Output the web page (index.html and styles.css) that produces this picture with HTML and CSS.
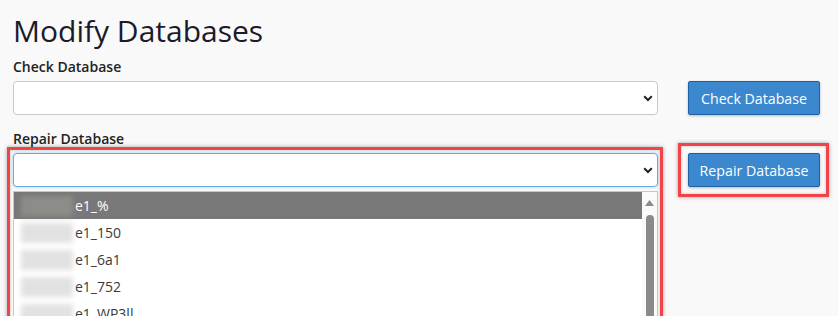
FILE: index.html
```html
<!DOCTYPE html>
<html>
<head>
<meta charset="utf-8">
<link rel="stylesheet" href="styles.css">
</head>
<body>
<div class="page">
  <h1 class="title">Modify Databases</h1>

  <div class="group">
    <label class="label">Check Database</label>
    <div class="row">
      <div class="select">
        <svg class="chev" width="10" height="7" viewBox="0 0 10 7"><path d="M1.2 1.3 L5 5 L8.8 1.3" fill="none" stroke="#222" stroke-width="2"/></svg>
      </div>
      <button class="btn">Check Database</button>
    </div>
  </div>

  <div class="group group2">
    <label class="label">Repair Database</label>
    <div class="row">
      <div class="annot annot-list">
        <div class="select focus">
          <svg class="chev" width="10" height="7" viewBox="0 0 10 7"><path d="M1.2 1.3 L5 5 L8.8 1.3" fill="none" stroke="#222" stroke-width="2"/></svg>
        </div>
        <div class="listbox">
          <div class="options">
            <div class="opt selected"><span class="blur"></span><span class="txt">e1_%</span></div>
            <div class="opt"><span class="blur"></span><span class="txt">e1_150</span></div>
            <div class="opt"><span class="blur"></span><span class="txt">e1_6a1</span></div>
            <div class="opt"><span class="blur"></span><span class="txt">e1_752</span></div>
            <div class="opt"><span class="blur"></span><span class="txt">e1_WP3ll</span></div>
          </div>
          <div class="scrollbar">
            <svg class="up" width="9" height="6" viewBox="0 0 9 6"><path d="M4.5 0 L9 6 L0 6 Z" fill="#8a8a8a"/></svg>
            <div class="thumb"></div>
          </div>
        </div>
      </div>
      <div class="annot annot-btn">
        <button class="btn">Repair Database</button>
      </div>
    </div>
  </div>
</div>
</body>
</html>
```

FILE: styles.css
```css
html, body {
  margin: 0;
  padding: 0;
  height: 100%;
  overflow: hidden;
  background: #f9f9f9;
}

.page {
  padding: 10px 0 0 13px;
  font-family: "Open Sans", "Liberation Sans", sans-serif;
  color: #333;
}

.title {
  margin: 0;
  font-size: 30px;
  font-weight: 400;
  line-height: 41px;
  color: #1b1b2b;
}

.group {
  margin-top: 6px;
}

.group2 {
  margin-top: 14px;
}

.label {
  display: block;
  font-size: 14px;
  font-weight: 600;
  line-height: 20px;
  color: #222;
  margin-bottom: 4px;
}

.group2 .label {
  margin-bottom: 4px;
}

.row {
  display: grid;
  grid-template-columns: 645px 132px;
  column-gap: 30px;
  align-items: start;
}

.select {
  box-sizing: border-box;
  height: 34px;
  background: #fff;
  border: 1px solid #c9c9c9;
  border-radius: 4px;
  display: flex;
  align-items: center;
  justify-content: flex-end;
  padding-right: 4px;
}

.select.focus {
  border-color: #6aa9dc;
  box-shadow: 0 0 3px rgba(102, 170, 225, 0.55);
}

.chev {
  display: block;
}

.btn {
  box-sizing: border-box;
  width: 132px;
  height: 34px;
  margin: 0;
  padding: 0;
  background: #3b88cf;
  border: 1px solid #1d60a6;
  border-radius: 2px;
  color: #fff;
  font-family: "Open Sans", "Liberation Sans", sans-serif;
  font-size: 14.2px;
  box-shadow: 0 1px 3px rgba(0, 0, 0, 0.25);
}

.annot {
  position: relative;
}

.annot::after {
  content: "";
  position: absolute;
  border: 3px solid #f0434a;
  box-shadow: 0 0 4px rgba(0, 0, 0, 0.35), inset 0 0 3px rgba(0, 0, 0, 0.25);
  pointer-events: none;
}

.annot-list::after {
  left: -6px;
  right: -5px;
  top: -6px;
  bottom: -6px;
}

.annot-btn::after {
  left: -10px;
  right: -9px;
  top: -10px;
  bottom: -10px;
}

.annot-btn .btn {
  display: block;
}

.listbox {
  margin-top: 4px;
  box-sizing: border-box;
  border: 1px solid #c8c8c8;
  background: #fff;
  display: flex;
  height: 150px;
}

.options {
  flex: 1;
}

.opt {
  height: 27px;
  display: flex;
  align-items: center;
  padding-left: 7px;
  font-size: 14px;
  color: #3a3a3a;
}

.opt.selected {
  background: #787878;
  color: #fff;
}

.blur {
  width: 52px;
  height: 20px;
  margin-right: 2px;
  background: #e2e2e2;
  filter: blur(2.5px);
}

.opt.selected .blur {
  background: #8c8c88;
}

.scrollbar {
  width: 15px;
  background: #fafafa;
  display: flex;
  flex-direction: column;
  align-items: center;
}

.up {
  display: block;
  margin-top: 8px;
}

.thumb {
  margin-top: 9px;
  width: 8px;
  flex: 1;
  background: #8a8a8a;
  border-radius: 4px;
}
```
